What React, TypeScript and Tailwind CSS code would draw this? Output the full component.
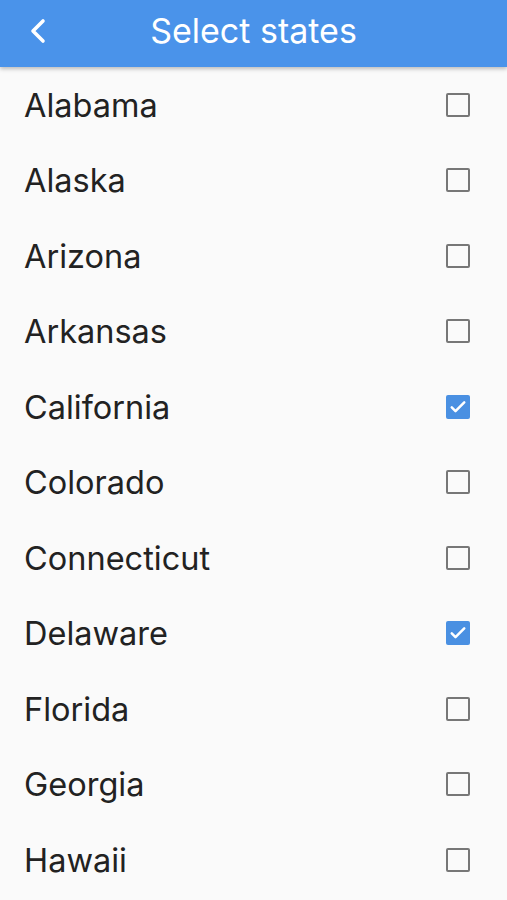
import { useState } from "react";

const STATES = [
  "Alabama",
  "Alaska",
  "Arizona",
  "Arkansas",
  "California",
  "Colorado",
  "Connecticut",
  "Delaware",
  "Florida",
  "Georgia",
  "Hawaii",
];

function Checkbox({ checked }: { checked: boolean }) {
  if (checked) {
    return <div className="w-[24px] h-[24px] rounded-[2px] bg-[#4a90e2] flex items-center justify-center">
      <svg width="20" height="20" viewBox="0 0 24 24" fill="none" stroke="white" strokeWidth="3" strokeLinecap="round" strokeLinejoin="round">
        <path d="M4.5 12.5l4.5 4.5L19.5 6.5" />
      </svg>
    </div>
  }
  return <div className="w-[24px] h-[24px] rounded-[2px] border-[2.5px] border-[#777]" />
}

export default function App() {
  const [selected, setSelected] = useState<Record<string, boolean>>({ California: true, Delaware: true })

  return <div className="w-[507px] h-[900px] overflow-hidden bg-[#fafafa] flex flex-col" style={{ fontFamily: 'Inter, "Liberation Sans", Arial, sans-serif' }}>
    <div className="h-[67px] shrink-0 bg-[#4a93ea] flex items-center relative z-10 shadow-[0_2px_4px_rgba(0,0,0,0.25)]">
      <button className="w-[80px] h-full flex items-center pl-[26px] pb-[6px] text-white">
        <svg width="24" height="30" viewBox="0 0 24 30" fill="none" stroke="white" strokeWidth="3.6" strokeLinecap="round" strokeLinejoin="round">
          <path d="M17 5L7 15l10 10" />
        </svg>
      </button>
      <div className="flex-1 text-center text-white text-[34px] pr-[80px] pb-[7px]">Select states</div>
    </div>
    <div className="flex flex-col">
      {STATES.map(s => (
        <div key={s} className="h-[75.5px] shrink-0 flex items-center justify-between pl-[24px] pr-[37px]" onClick={() => setSelected({ ...selected, [s]: !selected[s] })}>
          <span className="text-[32.5px] text-[#222] pt-[3px]">{s}</span>
          <Checkbox checked={!!selected[s]} />
        </div>
      ))}
    </div>
  </div>
}
